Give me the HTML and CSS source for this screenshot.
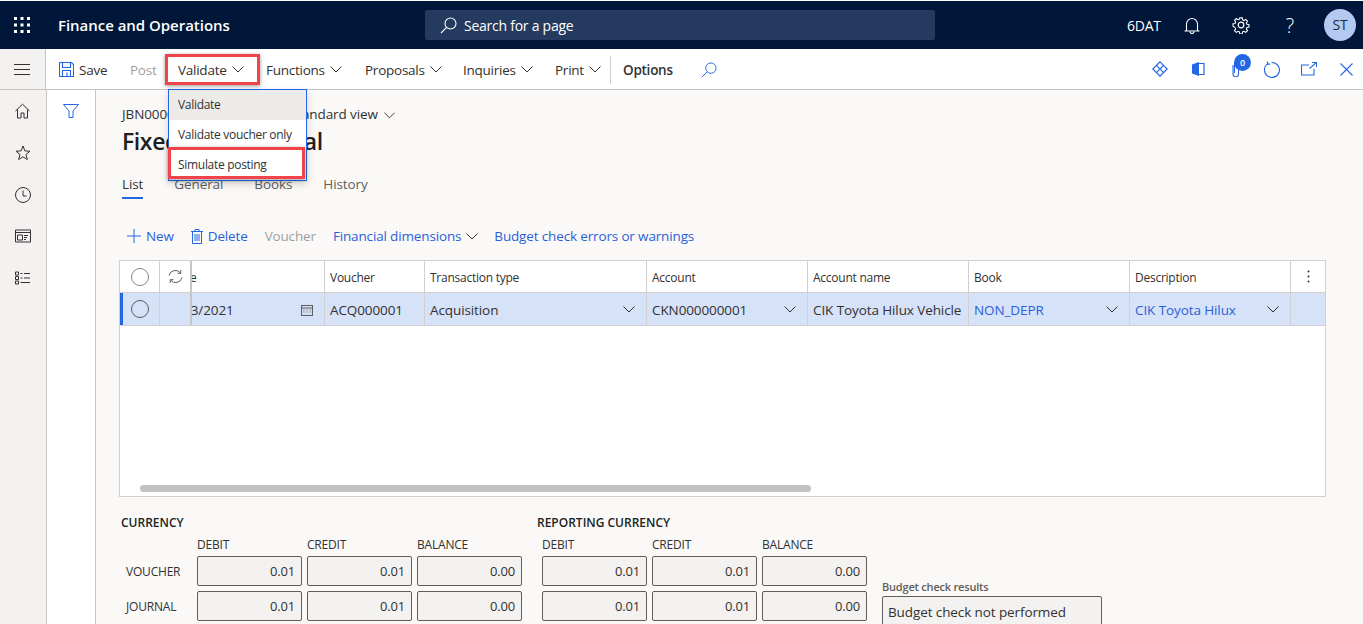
FILE: index.html
```html
<!DOCTYPE html>
<html lang="en">
<head>
    <meta charset="UTF-8">
    <title>Fixed asset journal</title>
    <link rel="stylesheet" href="styles.css">
</head>
<body>
    <header class="topbar">
        <svg class="waffle" width="16" height="16" viewBox="0 0 16 16" fill="#fff"><rect x="0" y="0" width="3" height="3"/><rect x="6.5" y="0" width="3" height="3"/><rect x="13" y="0" width="3" height="3"/><rect x="0" y="6.5" width="3" height="3"/><rect x="6.5" y="6.5" width="3" height="3"/><rect x="13" y="6.5" width="3" height="3"/><rect x="0" y="13" width="3" height="3"/><rect x="6.5" y="13" width="3" height="3"/><rect x="13" y="13" width="3" height="3"/></svg>
        <div class="app-name">Finance and Operations</div>
        <div class="search-box">
            <svg width="17" height="17" viewBox="0 0 17 17" fill="none" stroke="#fff" stroke-width="1.1"><circle cx="10.5" cy="6.5" r="5.5"/><path d="M6.6 10.4 1 16"/></svg>
            <span>Search for a page</span>
        </div>
        <div class="company">6DAT</div>
        <svg class="top-icon bell" width="16" height="17" viewBox="0 0 16 17" fill="none" stroke="#fff" stroke-width="1.1"><path d="M2.5 13V7a5.5 5.5 0 0 1 11 0v6l1 1H1.500z"/><path d="M6 14.500a2 2 0 0 0 4 0"/></svg>
        <svg class="top-icon gear" width="18" height="18" viewBox="0 0 18 18" fill="none" stroke="#fff" stroke-width="1.2"><circle cx="9" cy="9" r="2.800"/><path d="M7.600 1h2.800l.4 2.300 1.500.7 2-1.300 2 2-1.300 2 .7 1.500 2.300.4v2.800l-2.300.4-.7 1.500 1.300 2-2 2-2-1.300-1.500.7-.4 2.300H7.600l-.4-2.300-1.500-.7-2 1.300-2-2 1.300-2-.7-1.500L0 10.400V7.600l2.300-.4.700-1.500-1.300-2 2-2 2 1.300 1.500-.7z" transform="translate(1 1) scale(.89)"/></svg>
        <div class="top-icon help">?</div>
        <div class="avatar">ST</div>
    </header>

    <div class="commandbar">
        <button class="nav-toggle">
            <svg width="16" height="11" viewBox="0 0 16 11" stroke="#323130" stroke-width="1"><path d="M0 .5h16M0 5.500h16M0 10.500h16"/></svg>
        </button>
        <div class="commands">
            <div class="cmd cmd-save">
                <svg width="15" height="15" viewBox="0 0 15 15" fill="none" stroke="#2266e3" stroke-width="1.100"><path d="M.5.500h12l2 2v12H.5z"/><path d="M3.500.500v5h8v-5M3.500 14.500v-6h8v6M8 10.500v4"/></svg>
                Save
            </div>
            <div class="cmd cmd-post disabled">Post</div>
            <div class="cmd cmd-validate">Validate <svg class="chev" width="12" height="7" viewBox="0 0 12 7"><path d="M.5.500 6 6l5.500-5.500"/></svg></div>
            <div class="cmd cmd-functions">Functions <svg class="chev" width="12" height="7" viewBox="0 0 12 7"><path d="M.5.500 6 6l5.500-5.500"/></svg></div>
            <div class="cmd cmd-proposals">Proposals <svg class="chev" width="12" height="7" viewBox="0 0 12 7"><path d="M.5.500 6 6l5.500-5.500"/></svg></div>
            <div class="cmd cmd-inquiries">Inquiries <svg class="chev" width="12" height="7" viewBox="0 0 12 7"><path d="M.5.500 6 6l5.500-5.500"/></svg></div>
            <div class="cmd cmd-print">Print <svg class="chev" width="12" height="7" viewBox="0 0 12 7"><path d="M.5.500 6 6l5.500-5.500"/></svg></div>
            <div class="cmd cmd-options">Options</div>
            <svg class="cmd-search" width="16" height="16" viewBox="0 0 17 17" fill="none" stroke="#2266e3" stroke-width="1"><circle cx="10.500" cy="6.500" r="5.500"/><path d="M6.600 10.400 1 16"/></svg>
        </div>
        <div class="tools">
            <svg class="tool-diamond" width="16" height="16" viewBox="0 0 16 16" fill="none" stroke="#2266e3" stroke-width="1.200"><path d="M8 .8 15.200 8 8 15.200.8 8z"/><path d="M4.400 4.400 11.600 11.600M11.600 4.400 4.400 11.600"/></svg>
            <svg class="tool-door" width="14" height="16" viewBox="0 0 14 16" fill="none" stroke="#2266e3" stroke-width="1.200"><path d="M8 2.500h5v11H8" /><path d="M1 3.500 8 1v14l-7-2.500z" fill="#2266e3" stroke="none"/></svg>
            <div class="attach">
                <svg width="10" height="16" viewBox="0 0 10 16" fill="none" stroke="#2266e3" stroke-width="1.100"><path d="M2 4v9a2.700 2.700 0 0 0 5.500 0V3a2 2 0 0 0-4 0v9"/></svg>
                <span class="badge">0</span>
            </div>
            <svg class="tool-refresh" width="17" height="17" viewBox="0 0 17 17" fill="none" stroke="#2266e3" stroke-width="1.100"><path d="M5 2.600A7.500 7.500 0 1 0 8.500 1.500"/><path d="M4.500.5V3.100h2.700"/></svg>
            <svg class="tool-open" width="16" height="14" viewBox="0 0 16 14" fill="none" stroke="#2266e3" stroke-width="1.100"><path d="M8 3H.5v10H13V7"/><path d="M8.500 6.500 15 .8M11 .5h4.500V5"/></svg>
            <svg class="tool-close" width="13" height="13" viewBox="0 0 13 13" stroke="#2266e3" stroke-width="1.100"><path d="M.5.500l12 12M12.500.500l-12 12"/></svg>
        </div>
    </div>

    <div class="main">
        <nav class="sidenav">
            <svg width="15" height="15" viewBox="0 0 15 15" fill="none" stroke="#323130"><path d="M.5 7.500 7.500.7l7 6.800M2.500 6v8.500h3.500V9.500h3v5h3.500V6"/></svg>
            <svg width="16" height="16" viewBox="0 0 16 16" fill="none" stroke="#323130"><path d="M8 1l1.900 4.900 5.100.3-4 3.300 1.300 5L8 11.800l-4.300 2.700 1.300-5-4-3.300 5.100-.3z"/></svg>
            <svg width="16" height="16" viewBox="0 0 16 16" fill="none" stroke="#323130"><circle cx="8" cy="8" r="7.500"/><path d="M8 3.500V9h3.500"/></svg>
            <svg width="16" height="13" viewBox="0 0 16 13" fill="none" stroke="#323130"><path d="M.5.500h15v12H.5zM.5 3h15"/><path d="M2.500 5.500h5v5h-5zM9 6h4M9 8h3M9 10h2"/></svg>
            <svg width="15" height="13" viewBox="0 0 15 13" fill="none" stroke="#323130"><path d="M.5.500h3v3h-3zM.5 5h3v3h-3zM.5 9.500h3v3h-3zM5.500 2h2M9 2h6M5.500 6.500h2M9 6.500h6M5.500 11h9.500"/></svg>
        </nav>
        <aside class="filterpane">
            <svg width="16" height="14" viewBox="0 0 16 14" fill="none" stroke="#2266e3"><path d="M.5.500h15L10 7v6.500H6V7z"/></svg>
        </aside>
        <section class="content">
            <div class="breadcrumb"><span class="journal-num">JBN000012</span><span>Standard view</span> <svg class="chev chev-view" width="11" height="7" viewBox="0 0 12 7"><path d="M.5.500 6 6l5.500-5.500"/></svg></div>
            <h1 class="page-title">Fixed asset journal</h1>
            <div class="tabs">
                <div class="tab tab-active">List</div>
                <div class="tab">General</div>
                <div class="tab">Books</div>
                <div class="tab">History</div>
            </div>
            <div class="actions">
                <div class="action action-new"><svg width="14" height="14" viewBox="0 0 14 14" stroke="#2266e3"><path d="M7 0v14M0 7h14"/></svg>New</div>
                <div class="action action-delete"><svg width="12" height="15" viewBox="0 0 12 15" fill="none" stroke="#2266e3"><path d="M0 2.500h12M4 2.500V.5h4v2M1.500 2.500v12h9v-12M4 5v7M6 5v7M8 5v7"/></svg>Delete</div>
                <div class="action-off">Voucher</div>
                <div class="action">Financial dimensions <svg class="chev chev-link" width="12" height="7" viewBox="0 0 12 7"><path d="M.5.500 6 6l5.500-5.500"/></svg></div>
                <div class="action action-budget">Budget check errors or warnings</div>
            </div>

            <div class="grid">
                <div class="grid-row grid-head">
                    <div class="cell cell-check"><span class="radio"></span></div>
                    <div class="cell cell-sync">
                        <svg width="15" height="15" viewBox="0 0 15 15" fill="none" stroke="#605e5c"><path d="M1 6.500A6.500 6.500 0 0 1 12.500 4M14 8.500A6.500 6.500 0 0 1 2.500 11M12.800 1v3.300H9.500M2.200 14v-3.300h3.300"/></svg>
                    </div>
                    <div class="cell cell-clip"><span class="clip-head">Date</span></div>
                    <div class="cell">Voucher</div>
                    <div class="cell">Transaction type</div>
                    <div class="cell">Account</div>
                    <div class="cell">Account name</div>
                    <div class="cell">Book</div>
                    <div class="cell">Description</div>
                    <div class="cell cell-more"><svg width="3" height="13" viewBox="0 0 3 13" fill="#323130"><circle cx="1.500" cy="1.500" r="1"/><circle cx="1.500" cy="6.500" r="1"/><circle cx="1.500" cy="11.500" r="1"/></svg></div>
                </div>
                <div class="grid-row grid-data">
                    <div class="cell cell-check"><span class="radio"></span></div>
                    <div class="cell cell-sync"></div>
                    <div class="cell cell-clip cell-date">
                        <span class="clip-date">01/13/2021</span>
                        <svg width="12" height="12" viewBox="0 0 12 12" fill="none" stroke="#605e5c"><path d="M.5 1.500h11v10H.5zM.5 4h11" stroke-width="1.100"/><path d="M2.500 6h1M5.500 6h1M8.500 6h1M2.500 8h1M5.500 8h1M8.500 8h1"/></svg>
                    </div>
                    <div class="cell">ACQ000001</div>
                    <div class="cell cell-drop">Acquisition <svg class="chev" width="12" height="7" viewBox="0 0 12 7"><path d="M.5.500 6 6l5.500-5.500"/></svg></div>
                    <div class="cell cell-drop">CKN000000001 <svg class="chev" width="12" height="7" viewBox="0 0 12 7"><path d="M.5.500 6 6l5.500-5.500"/></svg></div>
                    <div class="cell">CIK Toyota Hilux Vehicle</div>
                    <div class="cell cell-drop cell-link">NON_DEPR <svg class="chev" width="12" height="7" viewBox="0 0 12 7"><path d="M.5.500 6 6l5.500-5.500"/></svg></div>
                    <div class="cell cell-drop cell-link">CIK Toyota Hilux <svg class="chev" width="12" height="7" viewBox="0 0 12 7"><path d="M.5.500 6 6l5.500-5.500"/></svg></div>
                    <div class="cell"></div>
                </div>
                <div class="grid-empty">
                    <div class="scrollbar"></div>
                </div>
            </div>

            <div class="totals">
                <div class="totals-group">
                    <div class="totals-title">CURRENCY</div>
                    <div class="totals-grid">
                        <div></div><div class="col-label">DEBIT</div><div class="col-label">CREDIT</div><div class="col-label">BALANCE</div>
                        <div class="row-label">VOUCHER</div><div class="amount">0.01</div><div class="amount">0.01</div><div class="amount">0.00</div>
                        <div class="row-label">JOURNAL</div><div class="amount">0.01</div><div class="amount">0.01</div><div class="amount">0.00</div>
                    </div>
                </div>
                <div class="totals-group group-reporting">
                    <div class="totals-title">REPORTING CURRENCY</div>
                    <div class="totals-grid grid-nolabel">
                        <div class="col-label">DEBIT</div><div class="col-label">CREDIT</div><div class="col-label">BALANCE</div>
                        <div class="amount">0.01</div><div class="amount">0.01</div><div class="amount">0.00</div>
                        <div class="amount">0.01</div><div class="amount">0.01</div><div class="amount">0.00</div>
                    </div>
                </div>
                <div class="budget">
                    <div class="budget-label">Budget check results</div>
                    <div class="budget-box">Budget check not performed</div>
                </div>
            </div>
        </section>
    </div>

    <div class="menu">
        <div class="menu-item menu-item-on">Validate</div>
        <div class="menu-item">Validate voucher only</div>
        <div class="menu-item">Simulate posting</div>
    </div>
    <div class="callout callout-validate"></div>
    <div class="callout callout-simulate"></div>
</body>
</html>
```

FILE: styles.css
```css
* {
    margin: 0;
    padding: 0;
    box-sizing: border-box;
}
html, body {
    height: 624px;
    overflow: hidden;
}
body {
    position: relative;
    font-family: "Open Sans", "Noto Sans", Arial, sans-serif;
    font-size: 13.5px;
    letter-spacing: -0.1px;
    color: #323130;
    background-color: #fff;
    padding-top: 1px;
}
.chev {
    fill: none;
    stroke: #323130;
    stroke-width: 1;
    flex: none;
}

/* top bar */
.topbar {
    height: 48px;
    display: flex;
    align-items: center;
    background-color: #00173a;
    color: #fff;
}
.waffle {
    margin-left: 14px;
}
.app-name {
    margin-left: 28px;
    width: 367px;
    font-size: 15px;
    font-weight: 600;
    letter-spacing: -0.03px;
}
.search-box {
    width: 510px;
    height: 30px;
    display: flex;
    align-items: center;
    gap: 7px;
    padding-left: 15px;
    background-color: #243a5e;
    border-radius: 2px;
    font-size: 14px;
    letter-spacing: -0.25px;
}
.company {
    margin-left: 192px;
    width: 57px;
    font-size: 14px;
    letter-spacing: -0.25px;
}
.gear {
    margin-left: 32px;
}
.help {
    margin-left: 33px;
    width: 14px;
    font-size: 20px;
    font-weight: 300;
    text-align: center;
}
.avatar {
    margin-left: 27px;
    width: 32px;
    height: 32px;
    border-radius: 50%;
    background-color: #b4c9f2;
    color: #1d2a44;
    font-size: 14px;
    text-align: center;
    line-height: 32px;
}

/* command bar */
.commandbar {
    height: 41px;
    display: flex;
    align-items: center;
    background-color: #fff;
    border-bottom: 1px solid #c8c6c4;
}
.nav-toggle {
    width: 46px;
    height: 100%;
    padding-top: 2px;
    padding-right: 2px;
    border: none;
    border-right: 1px solid #c8c6c4;
    background: #f3f2f1;
    margin-right: 13px;
}
.commands {
    display: flex;
    align-items: center;
    height: 100%;
    padding-top: 1px;
    letter-spacing: -0.25px;
}
.cmd {
    display: flex;
    align-items: center;
    gap: 5px;
}
.cmd-save { width: 71px; }
.cmd-post { width: 48px; }
.cmd-validate { width: 88px; }
.cmd-functions { width: 99px; }
.cmd-proposals { width: 98px; }
.cmd-inquiries { width: 92px; }
.cmd-print { width: 56px; height: 28px; border-right: 1px solid #d2d0ce; }
.cmd-options {
    margin-left: 12px;
    width: 78px;
    font-weight: 600;
}
.disabled {
    color: #a19f9d;
}
.tools {
    margin-left: auto;
    margin-right: 10px;
    display: flex;
    align-items: center;
}
.tool-door { margin-left: 23px; }
.attach { margin-left: 26px; }
.tool-refresh { margin-left: 22px; }
.tool-open { margin-left: 21px; }
.tool-close { margin-left: 23px; }
.attach {
    position: relative;
    display: flex;
}
.badge {
    position: absolute;
    top: -7px;
    left: 3px;
    width: 17px;
    height: 17px;
    border-radius: 50%;
    background-color: #2266e3;
    color: #fff;
    font-size: 9px;
    font-weight: 600;
    text-align: center;
    line-height: 17px;
}

/* main area */
.main {
    display: flex;
    height: 534px;
}
.sidenav {
    width: 47px;
    flex: none;
    display: flex;
    flex-direction: column;
    align-items: center;
    gap: 25.75px;
    padding-top: 13px;
    padding-right: 1px;
    background-color: #f3f2f1;
    border-right: 1px solid #c8c6c4;
}
.sidenav svg {
    height: 16px;
}
.filterpane {
    width: 49px;
    flex: none;
    padding-top: 14px;
    padding-left: 16px;
    background-color: #fff;
    border-right: 1px solid #c8c6c4;
}
.content {
    flex: 1;
    background-color: #faf9f8;
    padding-left: 23px;
    min-width: 0;
}
.breadcrumb {
    margin-top: 15px;
    margin-left: 3px;
    height: 18px;
    line-height: 18px;
}
.journal-num {
    margin-right: 100px;
}
.chev-view {
    margin-left: 3px;
}
.page-title {
    margin-left: 3px;
    margin-top: 2px;
    height: 32px;
    line-height: 32px;
    font-size: 23px;
    font-weight: 600;
    letter-spacing: -0.4px;
    color: #201f1e;
}
.tabs {
    display: flex;
    margin-top: 15px;
    margin-left: 3px;
    height: 27px;
    color: #605e5c;
}
.tab {
    line-height: 24px;
    margin-right: 31px;
}
.tab-active {
    color: #323130;
    border-bottom: 2px solid #2266e3;
    height: 27px;
}
.actions {
    display: flex;
    align-items: center;
    gap: 17px;
    margin-top: 27px;
    margin-left: 8px;
    height: 20px;
    letter-spacing: -0.15px;
    color: #2b5fd9;
}
.action {
    display: flex;
    align-items: center;
    gap: 5px;
}
.action-off {
    color: #a19f9d;
}
.action-budget {
    margin-left: -1px;
}

/* table */
.grid {
    margin-top: 14px;
    width: 1207px;
    height: 237px;
    background-color: #fff;
    border: 1px solid #d2d0ce;
}
.grid-row {
    display: grid;
    grid-template-columns: 40px 32px 133px 100px 222px 161px 161px 161px 161px 1fr;
}
.grid-head {
    height: 32px;
    border-bottom: 1px solid #d2d0ce;
    font-size: 12px;
    font-weight: 500;
    letter-spacing: -0.25px;
}
.grid-head .cell {
    padding-top: 2px;
}
.grid-head .cell-check,
.grid-head .cell-sync,
.grid-head .cell-more {
    padding-top: 0;
}
.grid-data {
    height: 33px;
    background-color: #d6e2f8;
    border-bottom: 1px solid #d2d0ce;
}
.grid-data .cell {
    padding-top: 1px;
}
.grid-data .cell-check {
    padding-top: 0;
    box-shadow: inset 3px 0 0 #2266e3;
}
.cell {
    display: flex;
    align-items: center;
    padding-left: 5px;
    border-right: 1px solid #d2d0ce;
    overflow: hidden;
    white-space: nowrap;
    min-width: 0;
}
.cell-check {
    justify-content: center;
    padding-left: 0;
}
.cell-sync {
    justify-content: center;
    padding-left: 0;
    border-right: 2px solid #c8c6c4;
}
.radio {
    width: 18px;
    height: 18px;
    border-radius: 50%;
    border: 1px solid #605e5c;
    background-color: #fff;
}
.grid-head .radio {
    border-color: #8a8886;
}
.grid-data .radio {
    background-color: transparent;
}
.clip-head {
    margin-left: -26px;
}
.clip-date {
    margin-left: -34px;
}
.cell-date {
    justify-content: space-between;
    padding-right: 11px;
}
.cell-drop {
    justify-content: space-between;
    padding-right: 11px;
}
.cell-link {
    color: #2b5fd9;
}
.cell-more {
    justify-content: center;
    padding-left: 0;
    border-right: none;
}
.grid-data .cell:last-child {
    border-right: none;
}
.grid-empty {
    height: 170px;
    display: flex;
    align-items: flex-end;
    padding: 0 0 4px 20px;
}
.scrollbar {
    width: 671px;
    height: 7px;
    border-radius: 4px;
    background-color: #c2c2c2;
}

/* totals */
.totals {
    display: flex;
    align-items: flex-start;
    margin-top: 17px;
    margin-left: 2px;
    font-size: 12px;
    letter-spacing: -0.2px;
}
.totals-group {
    width: 416px;
}
.group-reporting {
    width: 345px;
}
.totals-title {
    height: 18px;
    line-height: 18px;
    font-weight: 600;
    letter-spacing: 0;
    color: #201f1e;
}
.totals-grid {
    display: grid;
    grid-template-columns: 71px 105px 105px 105px;
    gap: 5px;
    margin-top: 6px;
}
.grid-nolabel {
    grid-template-columns: 105px 105px 105px;
    margin-left: 5px;
}
.col-label {
    height: 13px;
    line-height: 13px;
}
.row-label {
    padding-left: 5px;
    align-self: center;
    margin-right: -5px;
}
.amount {
    height: 30px;
    padding-right: 6px;
    text-align: right;
    line-height: 29px;
    font-size: 13px;
    background-color: #f3f2f1;
    border: 1px solid #605e5c;
    border-radius: 2px;
}
.budget {
    margin-top: 65px;
}
.budget-label {
    height: 16px;
    line-height: 16px;
    font-size: 11px;
    font-weight: 600;
    color: #605e5c;
}
.budget-box {
    width: 220px;
    height: 30px;
    margin-top: 1px;
    padding-left: 5px;
    line-height: 30px;
    font-size: 13.5px;
    letter-spacing: -0.1px;
    background-color: #f3f2f1;
    border: 1px solid #605e5c;
    border-radius: 2px;
}

/* dropdown and the red marks drawn over the screenshot */
.menu {
    position: absolute;
    left: 168px;
    top: 89px;
    width: 139px;
    background-color: #fff;
    border: 1px solid #2266e3;
    font-size: 12px;
    letter-spacing: -0.3px;
    box-shadow: 0 3px 8px rgba(0,0,0,0.15);
}
.menu-item {
    height: 30px;
    line-height: 30px;
    padding-left: 9px;
}
.menu-item-on {
    background-color: #edebe9;
}
.callout {
    position: absolute;
    border: 3px solid #f0434a;
    box-shadow: 0 1px 4px rgba(0,0,0,0.4);
}
.callout-validate {
    left: 165px;
    top: 54px;
    width: 95px;
    height: 31px;
}
.callout-simulate {
    left: 168px;
    top: 147px;
    width: 137px;
    height: 32px;
}
```
